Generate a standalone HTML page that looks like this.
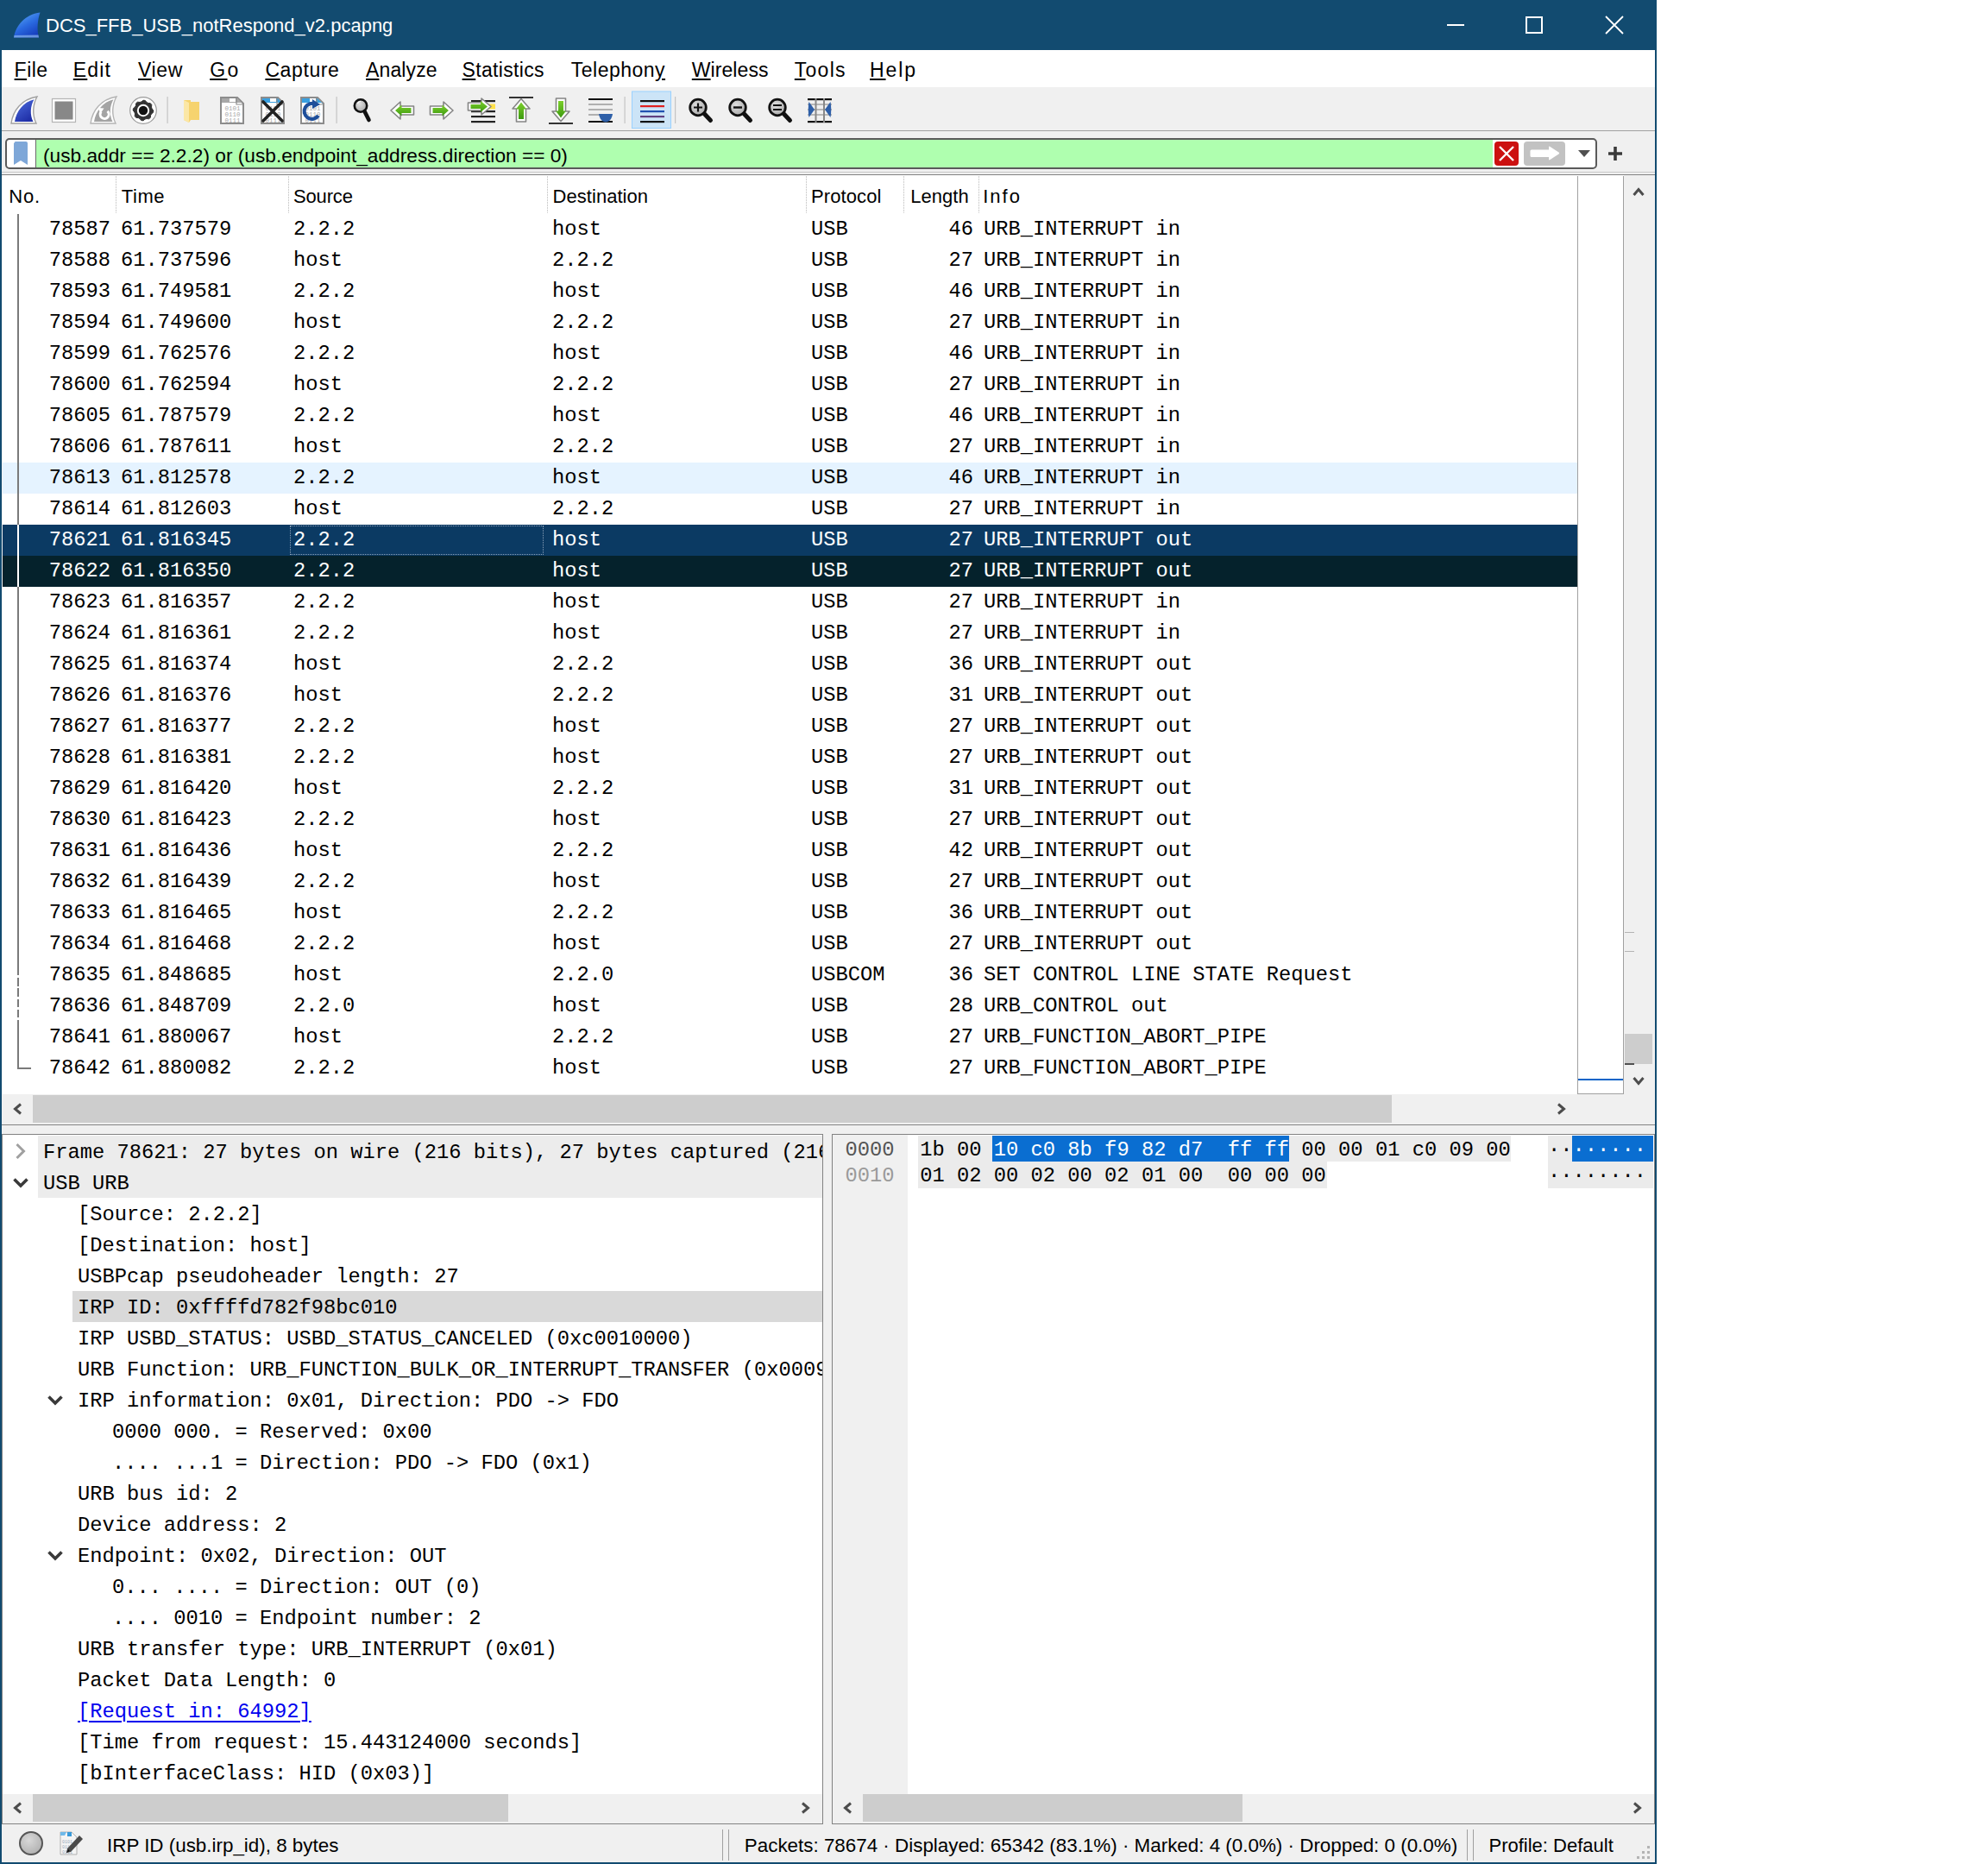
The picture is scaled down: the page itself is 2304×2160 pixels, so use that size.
<!DOCTYPE html>
<html><head><meta charset="utf-8"><title>Wireshark</title>
<style>
html,body{margin:0;padding:0;background:#fff;}
body{width:2304px;height:2160px;position:relative;overflow:hidden;font-family:"Liberation Sans", sans-serif;}
.a{position:absolute;}
.m{position:absolute;font-family:"Liberation Mono", monospace;font-size:23.75px;white-space:pre;line-height:36px;color:#000;}
.s{position:absolute;font-family:"Liberation Sans", sans-serif;white-space:pre;color:#000;}
.mi u{text-decoration:underline;text-decoration-thickness:2px;text-underline-offset:2px;}
</style></head><body>

<div class="a" style="left:0;top:0;width:1920px;height:2160px;background:#124b70;"></div>
<div class="a" style="left:2px;top:58px;width:1916px;height:2100px;background:#f0f0f0;"></div>
<svg class="a" style="left:14px;top:12px" width="34" height="34" viewBox="0 0 34 34">
<defs><linearGradient id="fin" x1="0.2" y1="0" x2="0.8" y2="1"><stop offset="0" stop-color="#5aa8f5"/><stop offset="0.5" stop-color="#2a6ae0"/><stop offset="1" stop-color="#1438b8"/></linearGradient></defs>
<path d="M2 31.5 C4 18 15 4.5 32.5 2.5 C29.5 11 28.5 22 31 31.5 Z" fill="url(#fin)"/>
<path d="M2.5 29 L30.5 28.5 L31 31.5 L2 31.5 Z" fill="#8cb8f0" opacity="0.7"/>
</svg>
<div class="s" style="left:53px;top:15px;font-size:22px;line-height:30px;color:#fff;">DCS_FFB_USB_notRespond_v2.pcapng</div>
<div class="a" style="left:1677px;top:28px;width:20px;height:2px;background:#fff;"></div>
<div class="a" style="left:1768px;top:19px;width:16px;height:16px;border:2px solid #fff;"></div>
<svg class="a" style="left:1860px;top:18px" width="22" height="22" viewBox="0 0 22 22"><path d="M1 1 L21 21 M21 1 L1 21" stroke="#fff" stroke-width="1.8"/></svg>
<div class="a" style="left:2px;top:58px;width:1916px;height:43px;background:#fff;"></div>
<div class="s mi" style="left:16.6px;top:66px;font-size:23px;line-height:30px;letter-spacing:0.47px;"><u>F</u>ile</div>
<div class="s mi" style="left:84.8px;top:66px;font-size:23px;line-height:30px;letter-spacing:1.13px;"><u>E</u>dit</div>
<div class="s mi" style="left:160px;top:66px;font-size:23px;line-height:30px;letter-spacing:0.63px;"><u>V</u>iew</div>
<div class="s mi" style="left:243.2px;top:66px;font-size:23px;line-height:30px;letter-spacing:2.4px;"><u>G</u>o</div>
<div class="s mi" style="left:307.4px;top:66px;font-size:23px;line-height:30px;letter-spacing:0.6px;"><u>C</u>apture</div>
<div class="s mi" style="left:424px;top:66px;font-size:23px;line-height:30px;letter-spacing:0.13px;"><u>A</u>nalyze</div>
<div class="s mi" style="left:535.6px;top:66px;font-size:23px;line-height:30px;letter-spacing:0.33px;"><u>S</u>tatistics</div>
<div class="s mi" style="left:661.8px;top:66px;font-size:23px;line-height:30px;letter-spacing:0.49px;">Telephon<u>y</u></div>
<div class="s mi" style="left:801.8px;top:66px;font-size:23px;line-height:30px;letter-spacing:0.07px;"><u>W</u>ireless</div>
<div class="s mi" style="left:920.8px;top:66px;font-size:23px;line-height:30px;letter-spacing:1.25px;"><u>T</u>ools</div>
<div class="s mi" style="left:1008px;top:66px;font-size:23px;line-height:30px;letter-spacing:1.93px;"><u>H</u>elp</div>
<div class="a" style="left:2px;top:101px;width:1916px;height:50px;background:#f0f0f0;"></div>
<div class="a" style="left:2px;top:151px;width:1916px;height:1px;background:#a0a0a0;"></div>
<svg class="a" style="left:0;top:100px" width="1000" height="52" viewBox="0 100 1000 52">
<defs>
<linearGradient id="gb" x1="0" y1="0" x2="0.6" y2="1"><stop offset="0" stop-color="#4e6fe0"/><stop offset="1" stop-color="#2030a8"/></linearGradient>
<radialGradient id="gl" cx="0.4" cy="0.35" r="0.7"><stop offset="0" stop-color="#e0e0e0"/><stop offset="1" stop-color="#a8a8a8"/></radialGradient>
<linearGradient id="gg" x1="0" y1="0" x2="0" y2="1"><stop offset="0" stop-color="#7ccf2c"/><stop offset="1" stop-color="#3d9a10"/></linearGradient>
</defs>
<path d="M13 143 C15 128 25 115 43 112 C38 121 37 133 42 143 Z" fill="#fff" stroke="#a0a0a0" stroke-width="1.4"/>
<path d="M17 141 C19 129 27 118 39.5 115.2 C35 123 34.5 133 38.5 141 Z" fill="url(#gb)"/>
<rect x="60.5" y="114.5" width="27" height="27" fill="#fff" stroke="#b4b4b4" stroke-width="1.2"/>
<rect x="63.5" y="117.5" width="21" height="21" fill="#888"/>
<path d="M105 143 C107 128 117 115 135 112 C130 121 129 133 134 143 Z" fill="#fff" stroke="#b4b4b4" stroke-width="1.4"/>
<path d="M109 141 C111 129 119 118 131.5 115.2 C127 123 126.5 133 130.5 141 Z" fill="#a4a4a4"/>
<path d="M117.2 129.5 A5 5 0 1 0 124.5 128.8" stroke="#fff" stroke-width="3" fill="none"/>
<path d="M113.5 125 L120.5 125.5 L116.5 131.5 Z" fill="#fff"/>
<circle cx="166" cy="128" r="15.3" fill="#fff" stroke="#9a9a9a" stroke-width="1.2"/>
<polygon points="166.00,116.20 168.30,116.43 169.94,118.48 171.72,119.44 174.34,119.66 175.81,121.44 175.52,124.06 176.10,125.99 177.80,128.00 177.57,130.30 175.52,131.94 174.56,133.72 174.34,136.34 172.56,137.81 169.94,137.52 168.01,138.10 166.00,139.80 163.70,139.57 162.06,137.52 160.28,136.56 157.66,136.34 156.19,134.56 156.48,131.94 155.90,130.01 154.20,128.00 154.43,125.70 156.48,124.06 157.44,122.28 157.66,119.66 159.44,118.19 162.06,118.48 163.99,117.90" fill="#333" stroke="#333" stroke-width="1" stroke-linejoin="round"/>
<circle cx="166" cy="128" r="7.2" fill="#fff"/>
<circle cx="166" cy="128" r="5.2" fill="#111"/>
<rect x="193.5" y="112" width="1.2" height="31" fill="#c4c4c4"/>
<rect x="389.5" y="112" width="1.2" height="31" fill="#c4c4c4"/>
<rect x="723.5" y="112" width="1.2" height="31" fill="#c4c4c4"/>
<rect x="782" y="112" width="1.2" height="31" fill="#c4c4c4"/>
<path d="M213 116 L221 116 L221 118 L231 118 L231 139 L221 139 L219 142 L213 139 Z" fill="#f6d36e"/>
<path d="M213 116 L219 119 L219 142 L213 139 Z" fill="#fbe7a6"/>
<path d="M256 113 L275 113 L282 120 L282 143 L256 143 Z" fill="#fff" stroke="#8c8c8c" stroke-width="2"/>
<path d="M257 114 L266 114 L266 118 L273 118 L273 114 L275 114 L281 120 L281 119 L257 119 Z" fill="#a8a8a8"/>
<path d="M274 113 L274 121 L282 121" fill="none" stroke="#8c8c8c" stroke-width="1.2"/>
<g fill="#a8a8a8" font-family="Liberation Mono" font-size="7.5"><text x="260.5" y="128">0101</text><text x="260.5" y="135">0110</text><text x="260.5" y="142">0111</text></g>
<path d="M303 113 L322 113 L329 120 L329 143 L303 143 Z" fill="#fff" stroke="#8c8c8c" stroke-width="2"/>
<path d="M304 114 L313 114 L313 118 L320 118 L320 114 L322 114 L328 120 L328 119 L304 119 Z" fill="#3aa0e0"/>
<path d="M321 113 L321 121 L329 121" fill="none" stroke="#8c8c8c" stroke-width="1.2"/>
<g fill="#a8a8a8" font-family="Liberation Mono" font-size="7.5"><text x="307.5" y="128">0101</text><text x="307.5" y="135">0110</text><text x="307.5" y="142">0111</text></g><path d="M305 118 L327 140 M327 118 L305 140" stroke="#222" stroke-width="3.6" stroke-linecap="round"/>
<path d="M349 113 L368 113 L375 120 L375 143 L349 143 Z" fill="#fff" stroke="#8c8c8c" stroke-width="2"/>
<path d="M350 114 L359 114 L359 118 L366 118 L366 114 L368 114 L374 120 L374 119 L350 119 Z" fill="#3aa0e0"/>
<path d="M367 113 L367 121 L375 121" fill="none" stroke="#8c8c8c" stroke-width="1.2"/>
<g fill="#a8a8a8" font-family="Liberation Mono" font-size="7.5"><text x="353.5" y="128">0101</text><text x="353.5" y="135">0110</text><text x="353.5" y="142">0111</text></g><path d="M369 134 A9 9 0 1 1 366 121" stroke="#1e4e9a" stroke-width="4.2" fill="none"/><path d="M362 115 L371 121 L362 126 Z" fill="#1e4e9a"/>
<circle cx="418" cy="122.5" r="7.2" fill="url(#gl)" stroke="#111" stroke-width="2.6"/>
<path d="M414.5 120 A4 4 0 0 1 418 117.5" stroke="#fff" stroke-width="1.2" fill="none"/>
<path d="M422.5 129 L427.5 139" stroke="#111" stroke-width="4.6" stroke-linecap="round"/>
<path d="M453 128 L464 118 L464 123 L479.5 123 L479.5 133 L464 133 L464 138 Z" fill="#fff" stroke="#858585" stroke-width="1.6" stroke-linejoin="round"/><path d="M458 128 L465.5 121.5 L465.5 125 L476.5 125 L476.5 131 L465.5 131 L465.5 134.5 Z" fill="url(#gg)"/>
<path d="M525 128 L514 118 L514 123 L498.5 123 L498.5 133 L514 133 L514 138 Z" fill="#fff" stroke="#858585" stroke-width="1.6" stroke-linejoin="round"/><path d="M520 128 L512.5 121.5 L512.5 125 L501.5 125 L501.5 131 L512.5 131 L512.5 134.5 Z" fill="url(#gg)"/>
<rect x="546" y="116" width="28" height="2.2" fill="#222"/>
<rect x="546" y="128" width="28" height="2.2" fill="#222"/>
<rect x="546" y="134" width="28" height="2.2" fill="#222"/>
<rect x="546" y="140" width="28" height="2.2" fill="#222"/>
<rect x="566" y="120.5" width="8" height="6" fill="#ffe14a"/>
<path d="M569 123.5 L558 114 L558 119 L542.5 119 L542.5 128 L558 128 L558 133 Z" fill="#fff" stroke="#858585" stroke-width="1.6" stroke-linejoin="round"/>
<path d="M565 123.5 L557 117 L557 121 L545.5 121 L545.5 126 L557 126 L557 130 Z" fill="url(#gg)"/>
<rect x="590" y="112" width="28" height="2" fill="#333"/>
<path d="M604 114.5 L614 126 L609.5 126 L609.5 141 L598.5 141 L598.5 126 L594 126 Z" fill="#fff" stroke="#858585" stroke-width="1.6" stroke-linejoin="round"/>
<path d="M604 118.5 L610 126.5 L607 126.5 L607 138 L601 138 L601 126.5 L598 126.5 Z" fill="url(#gg)"/>
<rect x="636" y="142" width="28" height="2" fill="#333"/>
<path d="M650 140.5 L660 129 L655.5 129 L655.5 114 L644.5 114 L644.5 129 L640 129 Z" fill="#fff" stroke="#858585" stroke-width="1.6" stroke-linejoin="round"/>
<path d="M650 136.5 L656 128.5 L653 128.5 L653 117 L647 117 L647 128.5 L644 128.5 Z" fill="url(#gg)"/>
<rect x="682" y="114" width="28" height="2" fill="#111"/>
<rect x="682" y="120" width="28" height="2" fill="#b0b0b0"/>
<rect x="682" y="126" width="28" height="2" fill="#b0b0b0"/>
<rect x="682" y="132" width="14" height="2" fill="#b0b0b0"/>
<rect x="682" y="140" width="28" height="2" fill="#111"/>
<path d="M694 132 L710 132 C709 138 706 141.5 702 141.5 C698 141.5 695 138 694 132 Z" fill="#2e5fa8"/>
<rect x="732.5" y="106" width="45" height="42.5" fill="#cce4f7" stroke="#99d1ff" stroke-width="1"/>
<rect x="742" y="116" width="28" height="2.2" fill="#111"/>
<rect x="742" y="122" width="28" height="2.2" fill="#e02020"/>
<rect x="742" y="128" width="28" height="2.2" fill="#2050b0"/>
<rect x="742" y="134" width="28" height="2.2" fill="#604080"/>
<rect x="742" y="140" width="28" height="2.2" fill="#111"/>
<circle cx="809" cy="124.5" r="9.3" fill="url(#gl)" stroke="#111" stroke-width="2.8"/><path d="M816.5 132 L823.5 139.5" stroke="#111" stroke-width="5" stroke-linecap="round"/><path d="M804 124.5 L814 124.5 M809 119.5 L809 129.5" stroke="#111" stroke-width="2.2"/>
<circle cx="855" cy="124.5" r="9.3" fill="url(#gl)" stroke="#111" stroke-width="2.8"/><path d="M862.5 132 L869.5 139.5" stroke="#111" stroke-width="5" stroke-linecap="round"/><path d="M850 124.5 L860 124.5" stroke="#111" stroke-width="2.4"/>
<circle cx="901" cy="124.5" r="9.3" fill="url(#gl)" stroke="#111" stroke-width="2.8"/><path d="M908.5 132 L915.5 139.5" stroke="#111" stroke-width="5" stroke-linecap="round"/><path d="M896 122 L906 122 M896 127 L906 127" stroke="#111" stroke-width="2.2"/>
<rect x="936" y="120" width="28" height="2" fill="#b8b8b8"/>
<rect x="936" y="126" width="28" height="2" fill="#b8b8b8"/>
<rect x="936" y="132" width="28" height="2" fill="#b8b8b8"/>
<rect x="936" y="114" width="28" height="2.2" fill="#111"/>
<rect x="936" y="140" width="28" height="2.2" fill="#111"/>
<rect x="944.5" y="114" width="2" height="28" fill="#888"/>
<rect x="954" y="114" width="2" height="28" fill="#888"/>
<path d="M937.5 118 L944 127 L937.5 136 C936.5 130 936.5 124 937.5 118 Z" fill="#2e5fa8"/>
<path d="M962.5 118 L956 127 L962.5 136 C963.5 130 963.5 124 962.5 118 Z" fill="#2e5fa8"/>
</svg>
<div class="a" style="left:2px;top:199px;width:1916px;height:1px;background:#c8c8c8;"></div>
<div class="a" style="left:2px;top:202px;width:1916px;height:1px;background:#828282;"></div>
<div class="a" style="left:6px;top:160px;width:1841px;height:31.5px;border:2px solid #5a5a5a;border-radius:5px;background:#fff;"></div>
<div class="a" style="left:41px;top:162px;width:1px;height:31.5px;background:#6a6a6a;"></div>
<div class="a" style="left:42px;top:162px;width:1688px;height:31.5px;background:#afffaf;"></div>
<svg class="a" style="left:16px;top:164px" width="16" height="28" viewBox="0 0 16 28"><path d="M1 1 Q1 0 2 0 L14 0 Q16 0 16 2 L16 27 L8 22 L0 27 L0 2 Z" fill="#7ea7d8"/></svg>
<div class="s" style="left:50px;top:166px;font-size:22.7px;line-height:28px;">(usb.addr == 2.2.2) or (usb.endpoint_address.direction == 0)</div>
<svg class="a" style="left:1732px;top:164px" width="28" height="28" viewBox="0 0 28 28"><rect x="0" y="0" width="28" height="28" rx="4" fill="#cc1010"/><path d="M6 6 L22 22 M22 6 L6 22" stroke="#fff" stroke-width="2.4"/></svg>
<svg class="a" style="left:1766px;top:164px" width="48" height="28" viewBox="0 0 48 28"><rect x="0" y="0" width="48" height="28" rx="4" fill="#c2c2c2"/><path d="M9 9.5 L29 9.5 L29 6.5 Q29 5 30.5 6 L40.5 12.5 Q41.8 13.5 40.5 14.5 L30.5 21 Q29 22 29 20.5 L29 18 L9 18 Q7.5 18 7.5 16.5 L7.5 11 Q7.5 9.5 9 9.5 Z" fill="#fff"/></svg>
<svg class="a" style="left:1828px;top:173px" width="16" height="10" viewBox="0 0 16 10"><path d="M1 1 L15 1 L8 9 Z" fill="#505050"/></svg>
<svg class="a" style="left:1863px;top:169px" width="18" height="18" viewBox="0 0 18 18"><path d="M9 1 L9 17 M1 9 L17 9" stroke="#3a3a3a" stroke-width="3.6"/></svg>
<div class="a" style="left:3px;top:203px;width:1879px;height:1065px;background:#fff;"></div>
<div class="a" style="left:134px;top:204px;width:1px;height:43px;background:repeating-linear-gradient(#d0d0d0 0 2px, #f4f4f4 2px 3px);"></div>
<div class="a" style="left:334px;top:204px;width:1px;height:43px;background:repeating-linear-gradient(#d0d0d0 0 2px, #f4f4f4 2px 3px);"></div>
<div class="a" style="left:634px;top:204px;width:1px;height:43px;background:repeating-linear-gradient(#d0d0d0 0 2px, #f4f4f4 2px 3px);"></div>
<div class="a" style="left:934px;top:204px;width:1px;height:43px;background:repeating-linear-gradient(#d0d0d0 0 2px, #f4f4f4 2px 3px);"></div>
<div class="a" style="left:1047px;top:204px;width:1px;height:43px;background:repeating-linear-gradient(#d0d0d0 0 2px, #f4f4f4 2px 3px);"></div>
<div class="a" style="left:1134px;top:204px;width:1px;height:43px;background:repeating-linear-gradient(#d0d0d0 0 2px, #f4f4f4 2px 3px);"></div>
<div class="a" style="left:1828px;top:204px;width:1px;height:1064px;background:#a0a0a0;"></div>
<div class="a" style="left:1881px;top:204px;width:1px;height:1064px;background:#a0a0a0;"></div>
<div class="a" style="left:1829px;top:1250px;width:52px;height:2px;background:#0a64c8;"></div>
<div class="a" style="left:1829px;top:1267px;width:52px;height:1px;background:#a0a0a0;"></div>
<div class="s" style="left:10.2px;top:213px;font-size:22px;line-height:30px;letter-spacing:0.9px;">No.</div>
<div class="s" style="left:140.8px;top:213px;font-size:22px;line-height:30px;letter-spacing:0.57px;">Time</div>
<div class="s" style="left:340px;top:213px;font-size:22px;line-height:30px;letter-spacing:-0.16px;">Source</div>
<div class="s" style="left:640.6px;top:213px;font-size:22px;line-height:30px;letter-spacing:0.04px;">Destination</div>
<div class="s" style="left:940px;top:213px;font-size:22px;line-height:30px;letter-spacing:0.1px;">Protocol</div>
<div class="s" style="left:1055.3px;top:213px;font-size:22px;line-height:30px;letter-spacing:0.02px;">Length</div>
<div class="s" style="left:1139.2px;top:213px;font-size:22px;line-height:30px;letter-spacing:2.03px;">Info</div>
<div class="m" style="left:56.75px;top:248px;">78587</div>
<div class="m" style="left:140px;top:248px;">61.737579</div>
<div class="m" style="left:340px;top:248px;">2.2.2</div>
<div class="m" style="left:640px;top:248px;">host</div>
<div class="m" style="left:940px;top:248px;">USB</div>
<div class="m" style="left:1099.5px;top:248px;">46</div>
<div class="m" style="left:1140px;top:248px;">URB_INTERRUPT in</div>
<div class="m" style="left:56.75px;top:284px;">78588</div>
<div class="m" style="left:140px;top:284px;">61.737596</div>
<div class="m" style="left:340px;top:284px;">host</div>
<div class="m" style="left:640px;top:284px;">2.2.2</div>
<div class="m" style="left:940px;top:284px;">USB</div>
<div class="m" style="left:1099.5px;top:284px;">27</div>
<div class="m" style="left:1140px;top:284px;">URB_INTERRUPT in</div>
<div class="m" style="left:56.75px;top:320px;">78593</div>
<div class="m" style="left:140px;top:320px;">61.749581</div>
<div class="m" style="left:340px;top:320px;">2.2.2</div>
<div class="m" style="left:640px;top:320px;">host</div>
<div class="m" style="left:940px;top:320px;">USB</div>
<div class="m" style="left:1099.5px;top:320px;">46</div>
<div class="m" style="left:1140px;top:320px;">URB_INTERRUPT in</div>
<div class="m" style="left:56.75px;top:356px;">78594</div>
<div class="m" style="left:140px;top:356px;">61.749600</div>
<div class="m" style="left:340px;top:356px;">host</div>
<div class="m" style="left:640px;top:356px;">2.2.2</div>
<div class="m" style="left:940px;top:356px;">USB</div>
<div class="m" style="left:1099.5px;top:356px;">27</div>
<div class="m" style="left:1140px;top:356px;">URB_INTERRUPT in</div>
<div class="m" style="left:56.75px;top:392px;">78599</div>
<div class="m" style="left:140px;top:392px;">61.762576</div>
<div class="m" style="left:340px;top:392px;">2.2.2</div>
<div class="m" style="left:640px;top:392px;">host</div>
<div class="m" style="left:940px;top:392px;">USB</div>
<div class="m" style="left:1099.5px;top:392px;">46</div>
<div class="m" style="left:1140px;top:392px;">URB_INTERRUPT in</div>
<div class="m" style="left:56.75px;top:428px;">78600</div>
<div class="m" style="left:140px;top:428px;">61.762594</div>
<div class="m" style="left:340px;top:428px;">host</div>
<div class="m" style="left:640px;top:428px;">2.2.2</div>
<div class="m" style="left:940px;top:428px;">USB</div>
<div class="m" style="left:1099.5px;top:428px;">27</div>
<div class="m" style="left:1140px;top:428px;">URB_INTERRUPT in</div>
<div class="m" style="left:56.75px;top:464px;">78605</div>
<div class="m" style="left:140px;top:464px;">61.787579</div>
<div class="m" style="left:340px;top:464px;">2.2.2</div>
<div class="m" style="left:640px;top:464px;">host</div>
<div class="m" style="left:940px;top:464px;">USB</div>
<div class="m" style="left:1099.5px;top:464px;">46</div>
<div class="m" style="left:1140px;top:464px;">URB_INTERRUPT in</div>
<div class="m" style="left:56.75px;top:500px;">78606</div>
<div class="m" style="left:140px;top:500px;">61.787611</div>
<div class="m" style="left:340px;top:500px;">host</div>
<div class="m" style="left:640px;top:500px;">2.2.2</div>
<div class="m" style="left:940px;top:500px;">USB</div>
<div class="m" style="left:1099.5px;top:500px;">27</div>
<div class="m" style="left:1140px;top:500px;">URB_INTERRUPT in</div>
<div class="a" style="left:3px;top:536px;width:1825px;height:36px;background:#e5f3ff;"></div>
<div class="m" style="left:56.75px;top:536px;">78613</div>
<div class="m" style="left:140px;top:536px;">61.812578</div>
<div class="m" style="left:340px;top:536px;">2.2.2</div>
<div class="m" style="left:640px;top:536px;">host</div>
<div class="m" style="left:940px;top:536px;">USB</div>
<div class="m" style="left:1099.5px;top:536px;">46</div>
<div class="m" style="left:1140px;top:536px;">URB_INTERRUPT in</div>
<div class="m" style="left:56.75px;top:572px;">78614</div>
<div class="m" style="left:140px;top:572px;">61.812603</div>
<div class="m" style="left:340px;top:572px;">host</div>
<div class="m" style="left:640px;top:572px;">2.2.2</div>
<div class="m" style="left:940px;top:572px;">USB</div>
<div class="m" style="left:1099.5px;top:572px;">27</div>
<div class="m" style="left:1140px;top:572px;">URB_INTERRUPT in</div>
<div class="a" style="left:3px;top:608px;width:1825px;height:36px;background:#0b3a63;"></div>
<div class="a" style="left:336px;top:609px;width:292px;height:32px;border:1px dotted #8aa0b8;"></div>
<div class="m" style="left:56.75px;top:608px;color:#fff;">78621</div>
<div class="m" style="left:140px;top:608px;color:#fff;">61.816345</div>
<div class="m" style="left:340px;top:608px;color:#fff;">2.2.2</div>
<div class="m" style="left:640px;top:608px;color:#fff;">host</div>
<div class="m" style="left:940px;top:608px;color:#fff;">USB</div>
<div class="m" style="left:1099.5px;top:608px;color:#fff;">27</div>
<div class="m" style="left:1140px;top:608px;color:#fff;">URB_INTERRUPT out</div>
<div class="a" style="left:3px;top:644px;width:1825px;height:36px;background:#05222c;"></div>
<div class="m" style="left:56.75px;top:644px;color:#fff;">78622</div>
<div class="m" style="left:140px;top:644px;color:#fff;">61.816350</div>
<div class="m" style="left:340px;top:644px;color:#fff;">2.2.2</div>
<div class="m" style="left:640px;top:644px;color:#fff;">host</div>
<div class="m" style="left:940px;top:644px;color:#fff;">USB</div>
<div class="m" style="left:1099.5px;top:644px;color:#fff;">27</div>
<div class="m" style="left:1140px;top:644px;color:#fff;">URB_INTERRUPT out</div>
<div class="m" style="left:56.75px;top:680px;">78623</div>
<div class="m" style="left:140px;top:680px;">61.816357</div>
<div class="m" style="left:340px;top:680px;">2.2.2</div>
<div class="m" style="left:640px;top:680px;">host</div>
<div class="m" style="left:940px;top:680px;">USB</div>
<div class="m" style="left:1099.5px;top:680px;">27</div>
<div class="m" style="left:1140px;top:680px;">URB_INTERRUPT in</div>
<div class="m" style="left:56.75px;top:716px;">78624</div>
<div class="m" style="left:140px;top:716px;">61.816361</div>
<div class="m" style="left:340px;top:716px;">2.2.2</div>
<div class="m" style="left:640px;top:716px;">host</div>
<div class="m" style="left:940px;top:716px;">USB</div>
<div class="m" style="left:1099.5px;top:716px;">27</div>
<div class="m" style="left:1140px;top:716px;">URB_INTERRUPT in</div>
<div class="m" style="left:56.75px;top:752px;">78625</div>
<div class="m" style="left:140px;top:752px;">61.816374</div>
<div class="m" style="left:340px;top:752px;">host</div>
<div class="m" style="left:640px;top:752px;">2.2.2</div>
<div class="m" style="left:940px;top:752px;">USB</div>
<div class="m" style="left:1099.5px;top:752px;">36</div>
<div class="m" style="left:1140px;top:752px;">URB_INTERRUPT out</div>
<div class="m" style="left:56.75px;top:788px;">78626</div>
<div class="m" style="left:140px;top:788px;">61.816376</div>
<div class="m" style="left:340px;top:788px;">host</div>
<div class="m" style="left:640px;top:788px;">2.2.2</div>
<div class="m" style="left:940px;top:788px;">USB</div>
<div class="m" style="left:1099.5px;top:788px;">31</div>
<div class="m" style="left:1140px;top:788px;">URB_INTERRUPT out</div>
<div class="m" style="left:56.75px;top:824px;">78627</div>
<div class="m" style="left:140px;top:824px;">61.816377</div>
<div class="m" style="left:340px;top:824px;">2.2.2</div>
<div class="m" style="left:640px;top:824px;">host</div>
<div class="m" style="left:940px;top:824px;">USB</div>
<div class="m" style="left:1099.5px;top:824px;">27</div>
<div class="m" style="left:1140px;top:824px;">URB_INTERRUPT out</div>
<div class="m" style="left:56.75px;top:860px;">78628</div>
<div class="m" style="left:140px;top:860px;">61.816381</div>
<div class="m" style="left:340px;top:860px;">2.2.2</div>
<div class="m" style="left:640px;top:860px;">host</div>
<div class="m" style="left:940px;top:860px;">USB</div>
<div class="m" style="left:1099.5px;top:860px;">27</div>
<div class="m" style="left:1140px;top:860px;">URB_INTERRUPT out</div>
<div class="m" style="left:56.75px;top:896px;">78629</div>
<div class="m" style="left:140px;top:896px;">61.816420</div>
<div class="m" style="left:340px;top:896px;">host</div>
<div class="m" style="left:640px;top:896px;">2.2.2</div>
<div class="m" style="left:940px;top:896px;">USB</div>
<div class="m" style="left:1099.5px;top:896px;">31</div>
<div class="m" style="left:1140px;top:896px;">URB_INTERRUPT out</div>
<div class="m" style="left:56.75px;top:932px;">78630</div>
<div class="m" style="left:140px;top:932px;">61.816423</div>
<div class="m" style="left:340px;top:932px;">2.2.2</div>
<div class="m" style="left:640px;top:932px;">host</div>
<div class="m" style="left:940px;top:932px;">USB</div>
<div class="m" style="left:1099.5px;top:932px;">27</div>
<div class="m" style="left:1140px;top:932px;">URB_INTERRUPT out</div>
<div class="m" style="left:56.75px;top:968px;">78631</div>
<div class="m" style="left:140px;top:968px;">61.816436</div>
<div class="m" style="left:340px;top:968px;">host</div>
<div class="m" style="left:640px;top:968px;">2.2.2</div>
<div class="m" style="left:940px;top:968px;">USB</div>
<div class="m" style="left:1099.5px;top:968px;">42</div>
<div class="m" style="left:1140px;top:968px;">URB_INTERRUPT out</div>
<div class="m" style="left:56.75px;top:1004px;">78632</div>
<div class="m" style="left:140px;top:1004px;">61.816439</div>
<div class="m" style="left:340px;top:1004px;">2.2.2</div>
<div class="m" style="left:640px;top:1004px;">host</div>
<div class="m" style="left:940px;top:1004px;">USB</div>
<div class="m" style="left:1099.5px;top:1004px;">27</div>
<div class="m" style="left:1140px;top:1004px;">URB_INTERRUPT out</div>
<div class="m" style="left:56.75px;top:1040px;">78633</div>
<div class="m" style="left:140px;top:1040px;">61.816465</div>
<div class="m" style="left:340px;top:1040px;">host</div>
<div class="m" style="left:640px;top:1040px;">2.2.2</div>
<div class="m" style="left:940px;top:1040px;">USB</div>
<div class="m" style="left:1099.5px;top:1040px;">36</div>
<div class="m" style="left:1140px;top:1040px;">URB_INTERRUPT out</div>
<div class="m" style="left:56.75px;top:1076px;">78634</div>
<div class="m" style="left:140px;top:1076px;">61.816468</div>
<div class="m" style="left:340px;top:1076px;">2.2.2</div>
<div class="m" style="left:640px;top:1076px;">host</div>
<div class="m" style="left:940px;top:1076px;">USB</div>
<div class="m" style="left:1099.5px;top:1076px;">27</div>
<div class="m" style="left:1140px;top:1076px;">URB_INTERRUPT out</div>
<div class="m" style="left:56.75px;top:1112px;">78635</div>
<div class="m" style="left:140px;top:1112px;">61.848685</div>
<div class="m" style="left:340px;top:1112px;">host</div>
<div class="m" style="left:640px;top:1112px;">2.2.0</div>
<div class="m" style="left:940px;top:1112px;">USBCOM</div>
<div class="m" style="left:1099.5px;top:1112px;">36</div>
<div class="m" style="left:1140px;top:1112px;">SET CONTROL LINE STATE Request</div>
<div class="m" style="left:56.75px;top:1148px;">78636</div>
<div class="m" style="left:140px;top:1148px;">61.848709</div>
<div class="m" style="left:340px;top:1148px;">2.2.0</div>
<div class="m" style="left:640px;top:1148px;">host</div>
<div class="m" style="left:940px;top:1148px;">USB</div>
<div class="m" style="left:1099.5px;top:1148px;">28</div>
<div class="m" style="left:1140px;top:1148px;">URB_CONTROL out</div>
<div class="m" style="left:56.75px;top:1184px;">78641</div>
<div class="m" style="left:140px;top:1184px;">61.880067</div>
<div class="m" style="left:340px;top:1184px;">host</div>
<div class="m" style="left:640px;top:1184px;">2.2.2</div>
<div class="m" style="left:940px;top:1184px;">USB</div>
<div class="m" style="left:1099.5px;top:1184px;">27</div>
<div class="m" style="left:1140px;top:1184px;">URB_FUNCTION_ABORT_PIPE</div>
<div class="m" style="left:56.75px;top:1220px;">78642</div>
<div class="m" style="left:140px;top:1220px;">61.880082</div>
<div class="m" style="left:340px;top:1220px;">2.2.2</div>
<div class="m" style="left:640px;top:1220px;">host</div>
<div class="m" style="left:940px;top:1220px;">USB</div>
<div class="m" style="left:1099.5px;top:1220px;">27</div>
<div class="m" style="left:1140px;top:1220px;">URB_FUNCTION_ABORT_PIPE</div>
<div class="a" style="left:20px;top:248px;width:2px;height:873px;background:#7a7a7a;"></div>
<div class="a" style="left:20px;top:1121px;width:2px;height:63px;background:repeating-linear-gradient(#7a7a7a 0 9.5px, transparent 9.5px 12.2px);"></div>
<div class="a" style="left:20px;top:1184px;width:2px;height:55px;background:#7a7a7a;"></div>
<div class="a" style="left:20px;top:1237px;width:16px;height:2px;background:#7a7a7a;"></div>
<div class="a" style="left:20px;top:608px;width:2px;height:72px;background:#fff;"></div>
<div class="a" style="left:1882px;top:204px;width:35px;height:1064px;background:#f0f0f0;"></div>
<svg class="a" style="left:1892px;top:216px" width="14" height="12" viewBox="0 0 14 12"><path d="M1.5 10 L7 3.5 L12.5 10" stroke="#4c4c4c" stroke-width="3" fill="none"/></svg>
<svg class="a" style="left:1892px;top:1246.5px" width="14" height="12" viewBox="0 0 14 12"><path d="M1.5 2 L7 8.5 L12.5 2" stroke="#4c4c4c" stroke-width="3" fill="none"/></svg>
<div class="a" style="left:1883px;top:1198px;width:32px;height:35px;background:#cdcdcd;"></div>
<div class="a" style="left:1883px;top:1232px;width:11px;height:2px;background:#505050;"></div>
<div class="a" style="left:1883px;top:1080px;width:11px;height:1px;background:#b4b4b4;"></div>
<div class="a" style="left:1883px;top:1102px;width:11px;height:1px;background:#b4b4b4;"></div>
<div class="a" style="left:3px;top:1268px;width:1914px;height:34px;background:#f0f0f0;"></div>
<div class="a" style="left:38px;top:1269px;width:1575px;height:32px;background:#cdcdcd;"></div>
<svg class="a" style="left:14px;top:1278px" width="12" height="14" viewBox="0 0 12 14"><path d="M10 1.5 L3.5 7 L10 12.5" stroke="#4c4c4c" stroke-width="3" fill="none"/></svg>
<svg class="a" style="left:1804px;top:1278px" width="12" height="14" viewBox="0 0 12 14"><path d="M2 1.5 L8.5 7 L2 12.5" stroke="#4c4c4c" stroke-width="3" fill="none"/></svg>
<div class="a" style="left:2px;top:1303px;width:1916px;height:1px;background:#828282;"></div>
<div class="a" style="left:2px;top:1304px;width:1916px;height:10px;background:#f0f0f0;"></div>
<div class="a" style="left:2px;top:1314px;width:952px;height:800px;background:#828282;"></div>
<div class="a" style="left:3px;top:1315px;width:950px;height:764px;background:#fff;overflow:hidden;" id="det">
<div class="a" style="left:41px;top:1px;width:920px;height:72px;background:#ececec;"></div>
<div class="a" style="left:81px;top:181px;width:880px;height:36px;background:#d9d9d9;"></div>
<div class="m" style="left:47px;top:2.5px;">Frame 78621: 27 bytes on wire (216 bits), 27 bytes captured (216 bits) on interface 0</div>
<svg class="a" style="left:14px;top:9px" width="14" height="20" viewBox="0 0 14 20"><path d="M2.5 2 L10.5 10 L2.5 18" stroke="#a0a0a0" stroke-width="3" fill="none"/></svg>
<div class="m" style="left:47px;top:38.5px;">USB URB</div>
<svg class="a" style="left:11px;top:49px" width="20" height="14" viewBox="0 0 20 14"><path d="M2.5 2.5 L10 10 L17.5 2.5" stroke="#3a3a3a" stroke-width="3.6" fill="none"/></svg>
<div class="m" style="left:87px;top:74.5px;">[Source: 2.2.2]</div>
<div class="m" style="left:87px;top:110.5px;">[Destination: host]</div>
<div class="m" style="left:87px;top:146.5px;">USBPcap pseudoheader length: 27</div>
<div class="m" style="left:87px;top:182.5px;">IRP ID: 0xffffd782f98bc010</div>
<div class="m" style="left:87px;top:218.5px;">IRP USBD_STATUS: USBD_STATUS_CANCELED (0xc0010000)</div>
<div class="m" style="left:87px;top:254.5px;">URB Function: URB_FUNCTION_BULK_OR_INTERRUPT_TRANSFER (0x0009)</div>
<div class="m" style="left:87px;top:290.5px;">IRP information: 0x01, Direction: PDO -&gt; FDO</div>
<svg class="a" style="left:51px;top:301px" width="20" height="14" viewBox="0 0 20 14"><path d="M2.5 2.5 L10 10 L17.5 2.5" stroke="#3a3a3a" stroke-width="3.6" fill="none"/></svg>
<div class="m" style="left:127px;top:326.5px;">0000 000. = Reserved: 0x00</div>
<div class="m" style="left:127px;top:362.5px;">.... ...1 = Direction: PDO -&gt; FDO (0x1)</div>
<div class="m" style="left:87px;top:398.5px;">URB bus id: 2</div>
<div class="m" style="left:87px;top:434.5px;">Device address: 2</div>
<div class="m" style="left:87px;top:470.5px;">Endpoint: 0x02, Direction: OUT</div>
<svg class="a" style="left:51px;top:481px" width="20" height="14" viewBox="0 0 20 14"><path d="M2.5 2.5 L10 10 L17.5 2.5" stroke="#3a3a3a" stroke-width="3.6" fill="none"/></svg>
<div class="m" style="left:127px;top:506.5px;">0... .... = Direction: OUT (0)</div>
<div class="m" style="left:127px;top:542.5px;">.... 0010 = Endpoint number: 2</div>
<div class="m" style="left:87px;top:578.5px;">URB transfer type: URB_INTERRUPT (0x01)</div>
<div class="m" style="left:87px;top:614.5px;">Packet Data Length: 0</div>
<div class="m" style="left:87px;top:650.5px;"><span style="color:#0000ee;text-decoration:underline;text-underline-offset:4px;text-decoration-thickness:2px">[Request in: 64992]</span></div>
<div class="m" style="left:87px;top:686.5px;">[Time from request: 15.443124000 seconds]</div>
<div class="m" style="left:87px;top:722.5px;">[bInterfaceClass: HID (0x03)]</div>
</div>
<div class="a" style="left:3px;top:2079px;width:950px;height:34px;background:#f0f0f0;"></div>
<div class="a" style="left:38px;top:2079px;width:551px;height:32px;background:#cdcdcd;"></div>
<svg class="a" style="left:14px;top:2088px" width="12" height="14" viewBox="0 0 12 14"><path d="M10 1.5 L3.5 7 L10 12.5" stroke="#4c4c4c" stroke-width="3" fill="none"/></svg>
<svg class="a" style="left:928px;top:2088px" width="12" height="14" viewBox="0 0 12 14"><path d="M2 1.5 L8.5 7 L2 12.5" stroke="#4c4c4c" stroke-width="3" fill="none"/></svg>
<div class="a" style="left:964px;top:1314px;width:954px;height:800px;background:#828282;"></div>
<div class="a" style="left:965px;top:1315px;width:952px;height:764px;background:#fff;overflow:hidden;">
<div class="a" style="left:0px;top:0px;width:87px;height:764px;background:#f0f0f0;"></div>
<div class="a" style="left:99px;top:1px;width:687px;height:30px;background:#ebebeb;"></div>
<div class="a" style="left:99px;top:31px;width:474px;height:31px;background:#ebebeb;"></div>
<div class="a" style="left:185px;top:1px;width:344px;height:30px;background:#0a6ed1;"></div>
<div class="a" style="left:829px;top:1px;width:122px;height:61px;background:#ebebeb;"></div>
<div class="a" style="left:857px;top:1px;width:94px;height:30px;background:#0a6ed1;"></div>
<div class="m" style="left:14.5px;top:3px;line-height:30px;color:#555;">0000</div>
<div class="m" style="left:14.5px;top:33px;line-height:30px;color:#9a9a9a;">0010</div>
<div class="m" style="left:101.20000000000005px;top:3px;line-height:30px;font-size:23.78px;">1b 00 <span style="color:#fff">10 c0 8b f9 82 d7  ff ff</span> 00 00 01 c0 09 00</div>
<div class="m" style="left:101.20000000000005px;top:33px;line-height:30px;font-size:23.78px;">01 02 00 02 00 02 01 00  00 00 00</div>
<div class="m" style="left:829px;top:3px;line-height:30px;">··<span style="color:#fff">······</span></div>
<div class="m" style="left:829px;top:33px;line-height:30px;color:#000;">········</div>
</div>
<div class="a" style="left:965px;top:2079px;width:952px;height:34px;background:#f0f0f0;"></div>
<div class="a" style="left:1000px;top:2079px;width:440px;height:32px;background:#cdcdcd;"></div>
<svg class="a" style="left:976px;top:2088px" width="12" height="14" viewBox="0 0 12 14"><path d="M10 1.5 L3.5 7 L10 12.5" stroke="#4c4c4c" stroke-width="3" fill="none"/></svg>
<svg class="a" style="left:1892px;top:2088px" width="12" height="14" viewBox="0 0 12 14"><path d="M2 1.5 L8.5 7 L2 12.5" stroke="#4c4c4c" stroke-width="3" fill="none"/></svg>
<div class="a" style="left:2px;top:2114px;width:1916px;height:44px;background:#f0f0f0;"></div>
<div class="a" style="left:22px;top:2122px;width:24px;height:24px;border-radius:50%;border:2px solid #555;background:radial-gradient(circle at 40% 35%, #d8d8d8, #a8a8a8);"></div>
<svg class="a" style="left:69px;top:2122px" width="28" height="28" viewBox="0 0 28 28">
<path d="M1 1 L14 1 L20 7 L20 27 L1 27 Z" fill="#f4f4f4" stroke="#b0b0b0" stroke-width="1"/>
<path d="M1 1 L9 1 L9 6 L14 6 L14 1 Z" fill="#3a9ad9"/>
<path d="M1 1 L8 1 L6 5 L1 5 Z" fill="#6fb9ea"/>
<g fill="#9ab" font-size="5" font-family="Liberation Mono"><text x="3" y="14">0101</text><text x="3" y="20">0110</text><text x="3" y="26">0111</text></g>
<path d="M9 20 L23 5 L27 9 L13 24 L8 25 Z" fill="#4a4a4a"/>
<path d="M8 25 L10 21 L12 23 Z" fill="#111"/>
</svg>
<div class="s" style="left:124px;top:2123.5px;font-size:22.4px;line-height:30px;">IRP ID (usb.irp_id), 8 bytes</div>
<div class="a" style="left:837px;top:2120px;width:1px;height:36px;background:#a0a0a0;"></div>
<div class="a" style="left:844px;top:2120px;width:1px;height:36px;background:#a0a0a0;"></div>
<div class="s" style="left:862.8px;top:2123.5px;font-size:22.4px;line-height:30px;">Packets: 78674 · Displayed: 65342 (83.1%) · Marked: 4 (0.0%) · Dropped: 0 (0.0%)</div>
<div class="a" style="left:1700px;top:2120px;width:1px;height:36px;background:#a0a0a0;"></div>
<div class="a" style="left:1707px;top:2120px;width:1px;height:36px;background:#a0a0a0;"></div>
<div class="s" style="left:1725.5px;top:2123.5px;font-size:22px;line-height:30px;">Profile: Default</div>
<div class="a" style="left:1908.5px;top:2138.5px;width:3px;height:3px;background:#b4b4b4;"></div>
<div class="a" style="left:1902.5px;top:2144.5px;width:3px;height:3px;background:#b4b4b4;"></div>
<div class="a" style="left:1908.5px;top:2144.5px;width:3px;height:3px;background:#b4b4b4;"></div>
<div class="a" style="left:1896.5px;top:2150.5px;width:3px;height:3px;background:#b4b4b4;"></div>
<div class="a" style="left:1902.5px;top:2150.5px;width:3px;height:3px;background:#b4b4b4;"></div>
<div class="a" style="left:1908.5px;top:2150.5px;width:3px;height:3px;background:#b4b4b4;"></div>
<!--BYTES-->
<!--STATUS-->
</body></html>
